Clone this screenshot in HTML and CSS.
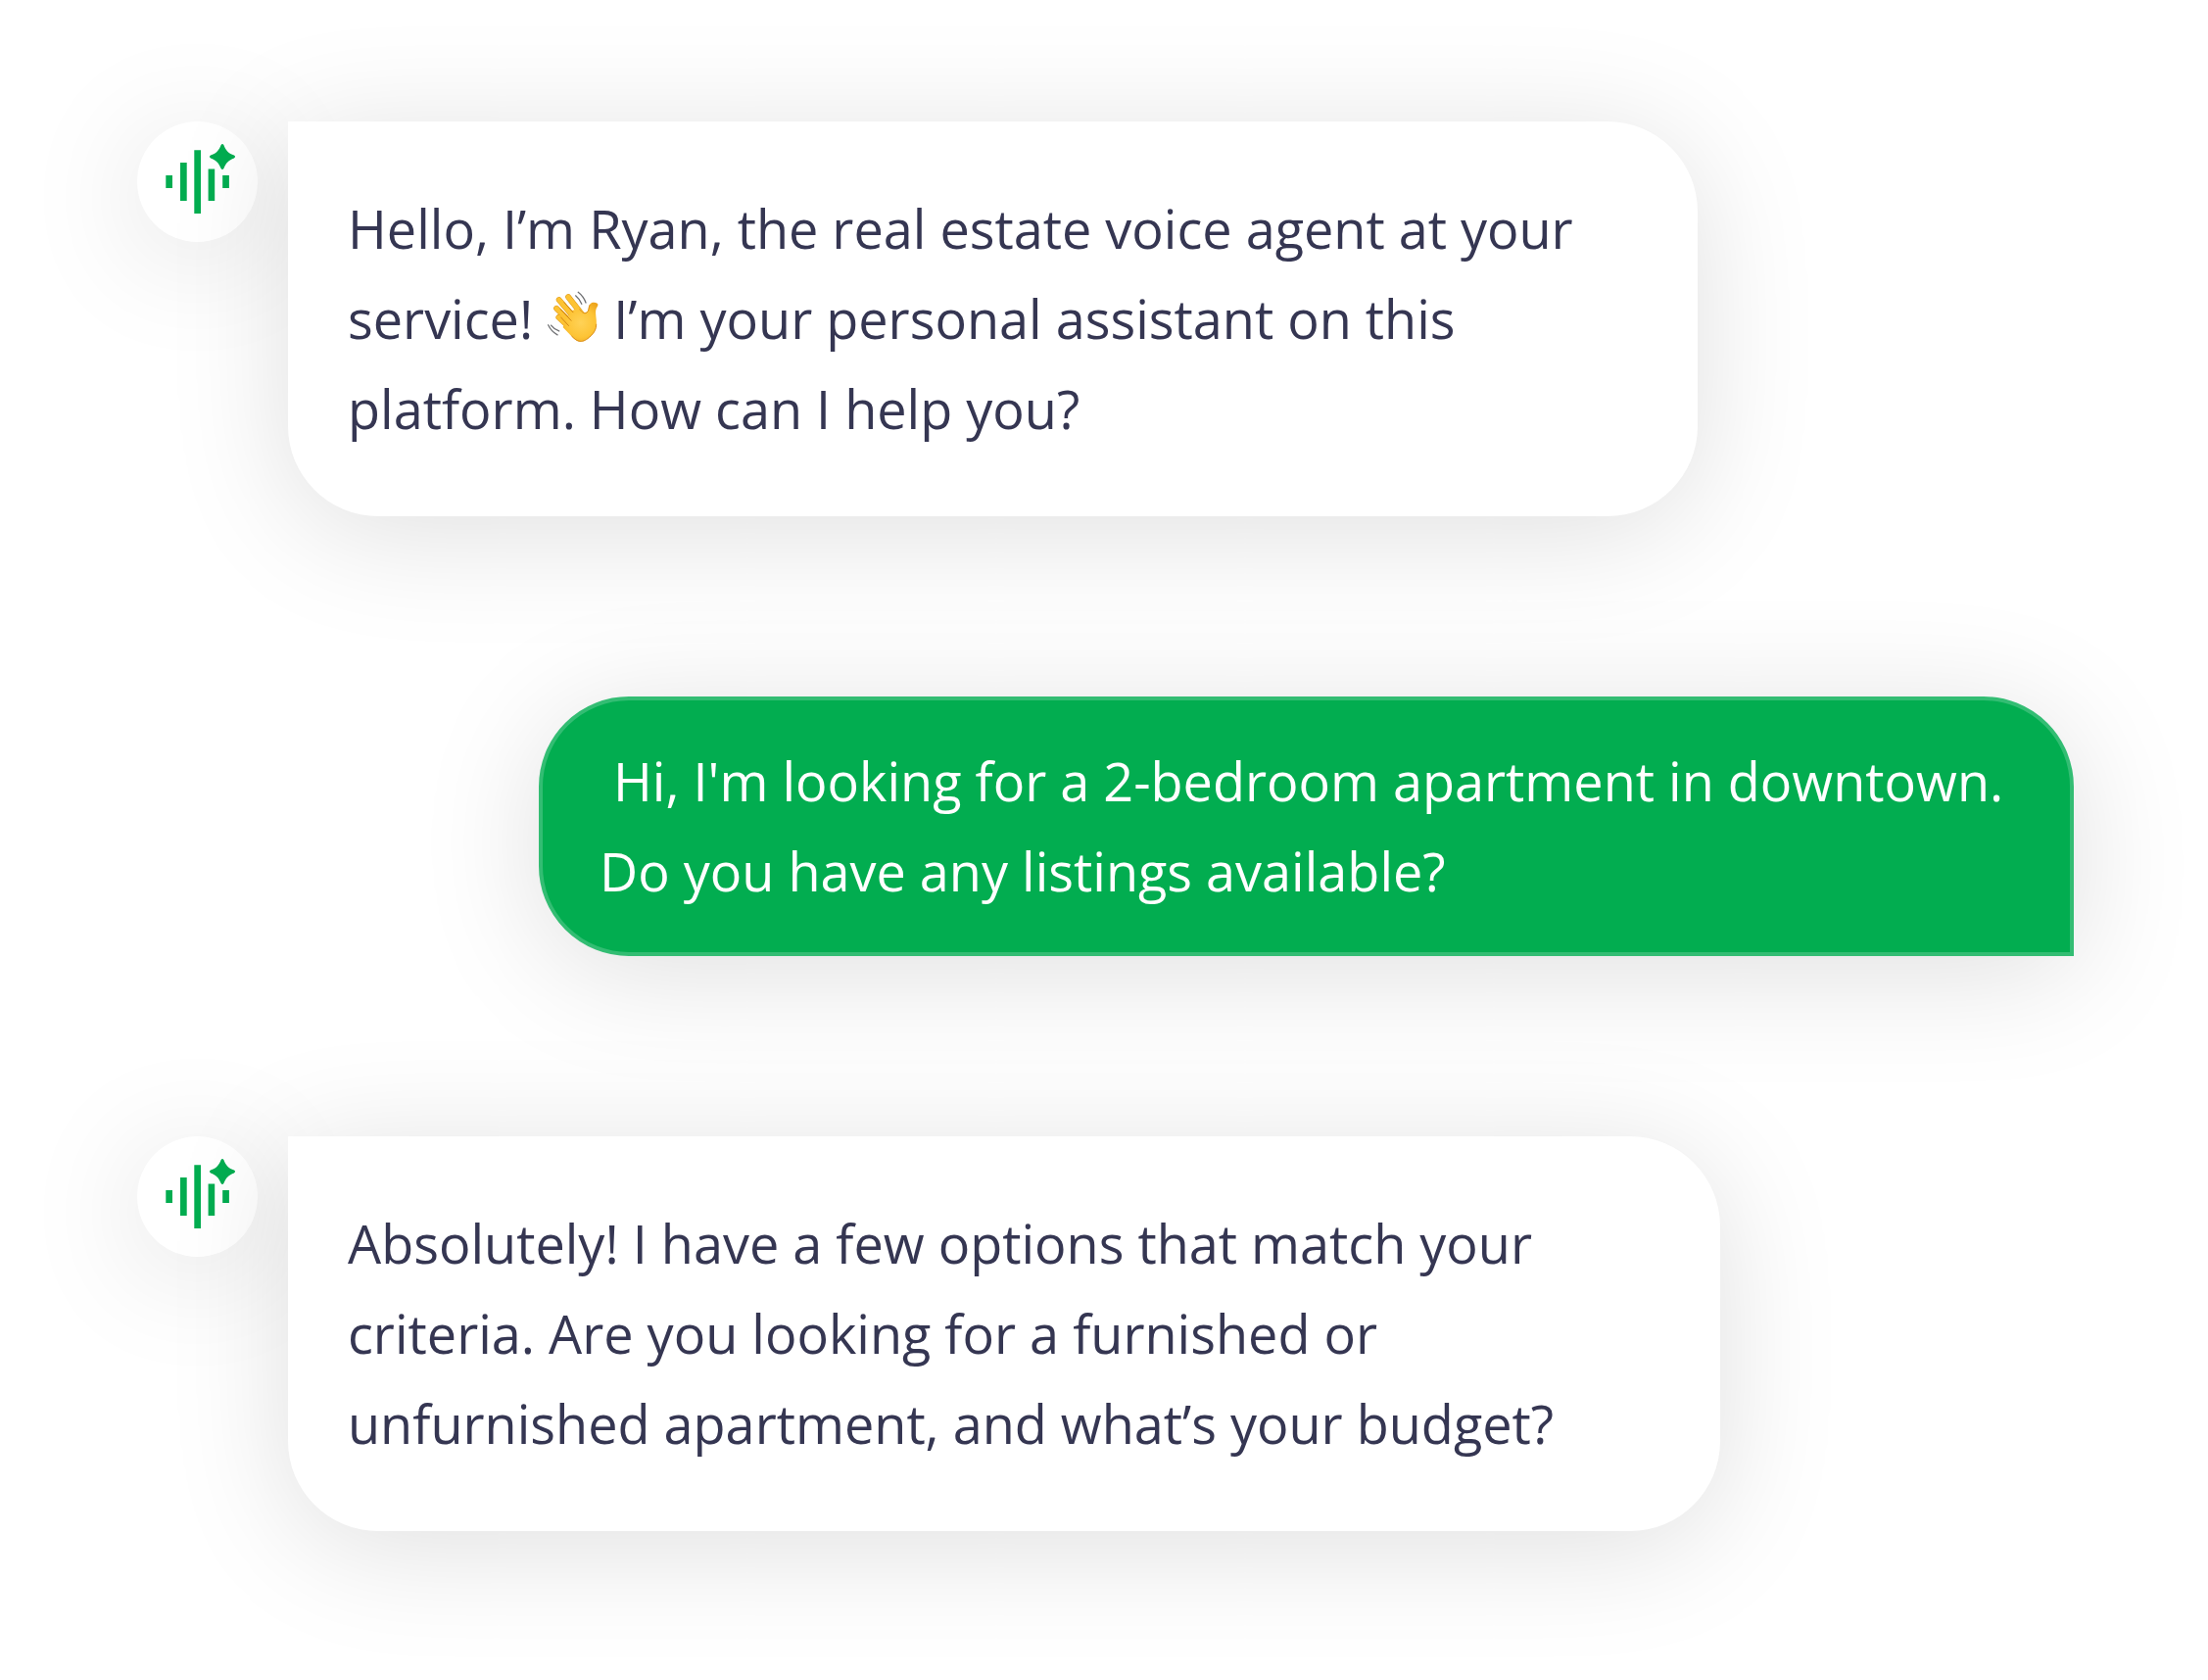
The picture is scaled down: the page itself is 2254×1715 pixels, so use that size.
FILE: index.html
```html
<!DOCTYPE html>
<html lang="en">
<head>
  <meta charset="UTF-8" />
  <meta name="viewport" content="width=device-width, initial-scale=1.0"/>
  <title>Real Estate Voice Agent</title>
  <link rel="stylesheet" href="styles.css">
</head>
<body>
  <!-- Shared agent logo -->
  <svg class="sprite" aria-hidden="true">
    <symbol id="agent-logo" viewBox="0 0 123 123">
      <path d="M29.3 55h6.7v13h-6.7zM44 42h6.7v39H44zM58.3 29.3H65V94h-6.7zM72.6 48.6h6.6V81h-6.6zM87.2 55h6.7v13h-6.7z"/>
      <path d="M85.600 24Q87 21.800 88.400 24C90.400 29.500 93.500 32.800 99 34.600Q101.200 36 99 37.400C93.500 39.200 90.400 42.500 88.400 48Q87 50.200 85.600 48C83.600 42.500 80.500 39.200 75 37.400Q72.800 36 75 34.600C80.500 32.800 83.600 29.500 85.600 24z"/>
    </symbol>
  </svg>

  <main class="chat">
    <!-- ================== Agent ================== -->
    <div class="message">
      <div class="avatar">
        <svg role="img" aria-label="Ryan"><use href="#agent-logo"/></svg>
      </div>
      <p class="bubble">Hello, I’m Ryan, the real estate voice agent at your service!
        <svg class="wave" viewBox="53 42 166 166" role="img" aria-label="Waving hand">
          <defs>
            <radialGradient id="palm" gradientUnits="userSpaceOnUse" cx="160" cy="145" r="75">
              <stop offset="0" stop-color="#ffd257"/>
              <stop offset="0.6" stop-color="#fdc436"/>
              <stop offset="1" stop-color="#eda41c"/>
            </radialGradient>
          </defs>
          <g fill="none" stroke-linecap="round" stroke="#e09a1c" stroke-width="18">
            <path d="M121 64L165 120M92 73L145 135M84 100L135 150M91 128L132 166"/>
          </g>
          <g fill="none" stroke-linecap="round" stroke="#fdc333" stroke-width="15">
            <path d="M121 64L165 120M92 73L145 135M84 100L135 150M91 128L132 166"/>
          </g>
          <path fill="url(#palm)" d="M156 100C163 110 170 115 177 112C186 108 183 96 188 88C193 80 205 80 212 84C217 88 212 94 209 100C205 110 208 122 209 136C211 160 206 173 193 186C180 198 170 205 158 204C146 203 136 193 126 182L104 159L116 132L134 106z"/>
          <g fill="none" stroke-linecap="round" stroke="#cf8214" stroke-width="3">
            <path d="M108 81L136 112M97 103L130 138M98 128L122 154"/>
          </g>
          <path fill="none" stroke="#d98c18" stroke-width="3" stroke-linecap="round" d="M157 103C164 113 171 118 179 113C187 108 184 98 188 90M209 150C209 166 203 175 192 186C178 199 169 204 158 203C148 202 142 197 132 187"/>
          <g fill="none" stroke="#707174" stroke-width="4" stroke-linecap="round">
            <path d="M152 49Q169 62 176 82M144 60Q156 70 163 86M67 153Q76 165 92 171M58 152Q68 173 87 183"/>
          </g>
        </svg>
        I’m your personal assistant on this platform. How can I help you?</p>
    </div>

    <!-- ================== Visitor ================== -->
    <div class="message message-user">
      <p class="bubble bubble-user">&nbsp;Hi, I'm looking for a 2-bedroom apartment in downtown. Do you have any listings available?</p>
    </div>

    <!-- ================== Agent ================== -->
    <div class="message">
      <div class="avatar">
        <svg role="img" aria-label="Ryan"><use href="#agent-logo"/></svg>
      </div>
      <p class="bubble bubble-wide">Absolutely! I have a few options that match your criteria. Are you looking for a furnished or unfurnished apartment, and what’s your budget?</p>
    </div>
  </main>
</body>
</html>
```
FILE: styles.css
```css
* {
  box-sizing: border-box;
}
body {
  margin: 0;
  background-color: #fff;
  font-family: "Open Sans", "Noto Sans", sans-serif;
  font-size: 54px;
  line-height: 92px;
  color: #353652;
}
.sprite {
  display: none;
}
.chat {
  display: flex;
  flex-direction: column;
  gap: 184px;
  padding: 124px 137px 152px 140px;
  overflow: hidden;
}
.message {
  display: flex;
  align-items: flex-start;
  gap: 31px;
}
.message-user {
  justify-content: flex-end;
}
.avatar {
  flex: none;
  width: 123px;
  height: 123px;
  border-radius: 50%;
  background-color: #fff;
  box-shadow: 0 16px 124px rgba(0, 0, 0, 0.13);
}
.avatar svg {
  display: block;
  width: 100%;
  height: 100%;
  fill: #02ad50;
}
.bubble {
  margin: 0;
  max-width: 1439px;
  padding: 63px 61px 64px;
  border-radius: 0 92px 92px 92px;
  background-color: #fff;
  box-shadow: 0 16px 124px rgba(0, 0, 0, 0.13);
}
.bubble-wide {
  max-width: 1462px;
}
.bubble-user {
  max-width: 1567px;
  padding: 36px 57px 37px 58px;
  border: 4px solid #33bd73;
  border-radius: 92px 92px 0 92px;
  background-color: #02ad50;
  color: #fff;
}
.wave {
  width: 54px;
  height: 54px;
  vertical-align: -4px;
}
```
